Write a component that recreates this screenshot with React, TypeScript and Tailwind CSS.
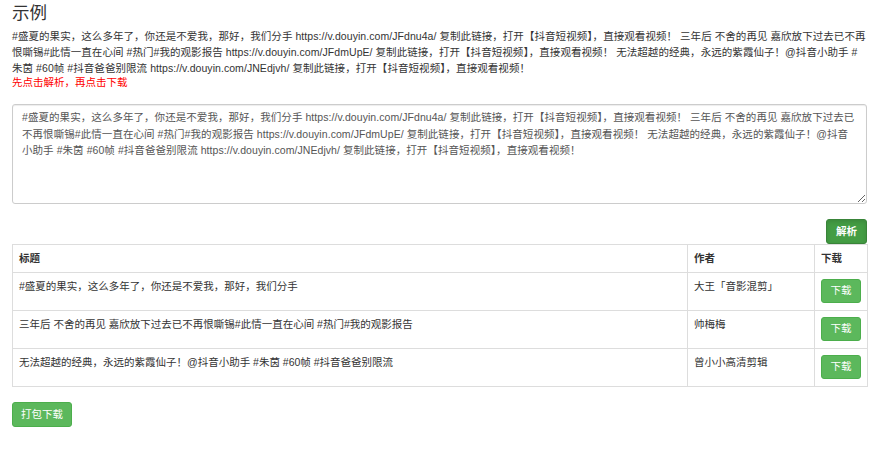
import React from "react";

const FONT = { fontFamily: '"Liberation Sans", "Noto Sans CJK SC", sans-serif' };

const fullText =
  "#盛夏的果实，这么多年了，你还是不爱我，那好，我们分手 https://v.douyin.com/JFdnu4a/ 复制此链接，打开【抖音短视频】，直接观看视频！ 三年后 不舍的再见 嘉欣放下过去已不再恨嘶锡#此情一直在心间 #热门#我的观影报告 https://v.douyin.com/JFdmUpE/ 复制此链接，打开【抖音短视频】，直接观看视频！ 无法超越的经典，永远的紫霞仙子！@抖音小助手 #朱茵 #60帧 #抖音爸爸别限流 https://v.douyin.com/JNEdjvh/ 复制此链接，打开【抖音短视频】，直接观看视频！";

const rows = [
  { title: "#盛夏的果实，这么多年了，你还是不爱我，那好，我们分手", author: "大王「音影混剪」" },
  { title: "三年后 不舍的再见 嘉欣放下过去已不再恨嘶锡#此情一直在心间 #热门#我的观影报告", author: "帅梅梅" },
  { title: "无法超越的经典，永远的紫霞仙子！@抖音小助手 #朱茵 #60帧 #抖音爸爸别限流", author: "曾小小高清剪辑" },
];

export default function App() {
  return (
    <div className="w-[878px] h-[470px] bg-white text-[#333] text-[10.5px]" style={FONT}>
      <div className="pl-[12px] w-[867px]">
        <div className="text-[17.5px] leading-[26px] h-[28px] text-[#333]">示例</div>
        <div className="leading-[16px] tracking-[0.06px]">{fullText}</div>
        <div className="leading-[12px] text-[#ff0000]">先点击解析，再点击下载</div>
        <textarea
          className="mt-[16px] block w-[855px] h-[100px] border border-[#ccc] rounded-[3px] px-[9px] py-[4px] leading-[16.7px] tracking-[0.06px] text-[#555] text-[10.5px] shadow-[inset_0_1px_1px_rgba(0,0,0,0.075)] resize-y outline-none"
          style={FONT}
          defaultValue={fullText}
        />
        <div className="flex justify-end mt-[15px] w-[855px]">
          <button className="w-[41px] h-[25px] rounded-[3px] bg-[#449d44] border border-[#398439] text-white text-[10.5px] font-bold shadow-[inset_0_2px_4px_rgba(0,0,0,0.125)]">
            解析
          </button>
        </div>
        <table className="w-[855px] border-collapse border border-[#ddd] table-fixed">
          <colgroup>
            <col className="w-[675px]" />
            <col className="w-[127px]" />
            <col className="w-[53px]" />
          </colgroup>
          <thead>
            <tr className="h-[28px]">
              <th className="border border-[#ddd] text-left font-bold px-[6px] align-middle">标题</th>
              <th className="border border-[#ddd] text-left font-bold px-[6px] align-middle">作者</th>
              <th className="border border-[#ddd] text-left font-bold px-[6px] align-middle">下载</th>
            </tr>
          </thead>
          <tbody>
            {rows.map((r, i) => (
              <tr key={i} className="h-[38px]">
                <td className="border border-[#ddd] px-[6px] pt-[6px] align-top leading-[15px]">{r.title}</td>
                <td className="border border-[#ddd] px-[6px] pt-[6px] align-top leading-[15px]">{r.author}</td>
                <td className="border border-[#ddd] px-[6px] pt-[6px] align-top">
                  <button className="w-[40px] h-[24px] rounded-[3px] bg-[#5cb85c] border border-[#4cae4c] text-white text-[10.5px]">
                    下载
                  </button>
                </td>
              </tr>
            ))}
          </tbody>
        </table>
        <button className="mt-[15px] w-[60px] h-[25px] rounded-[3px] bg-[#5cb85c] border border-[#4cae4c] text-white text-[10.5px]">
          打包下载
        </button>
      </div>
    </div>
  );
}
